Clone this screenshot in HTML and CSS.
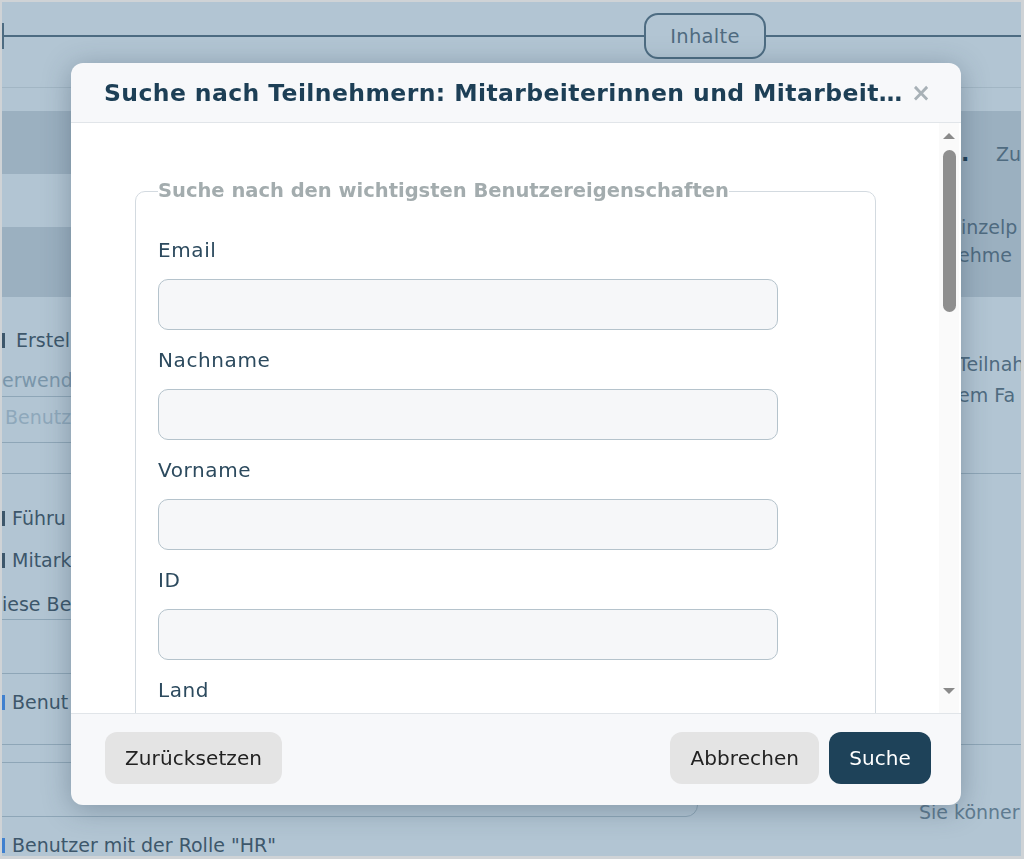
FILE: index.html
```html
<!DOCTYPE html>
<html lang="de">
<head>
<meta charset="utf-8">
<title>Suche nach Teilnehmern</title>
<link rel="stylesheet" href="styles.css">
</head>
<body>
<div class="frame">
  <div class="page">
    <header class="tabs">
      <span class="tick"></span>
      <span class="tab">Inhalte</span>
    </header>

    <section class="band">
      <div class="band-left">
        <div class="band-cell dark h63"></div>
        <div class="band-cell light h53"></div>
        <div class="band-cell dark h70"></div>
      </div>
      <div class="band-right">
        <p class="bg-line first"><span class="dot">.</span><span class="zu">Zu</span></p>
        <p class="bg-line r-inz">inzelp</p>
        <p class="bg-line r-ehm">ehme</p>
      </div>
    </section>

    <section class="rows rows-c">
      <div class="col-left">
        <p class="bg-line erstel"><span class="mark"></span>Erstel</p>
        <p class="bg-line muted erw">erwende</p>
        <p class="bg-line faint benutz">Benutz</p>
      </div>
      <div class="col-right">
        <p class="bg-line teil">Teilnah</p>
        <p class="bg-line emfa">em Fa</p>
      </div>
    </section>

    <section class="rows rows-d">
      <div class="col-left">
        <p class="bg-line fuehr"><span class="mark"></span>Führu</p>
        <p class="bg-line mitar"><span class="mark"></span>Mitark</p>
        <p class="bg-line diese">iese Be</p>
        <p class="bg-line benut"><span class="mark blue"></span>Benut</p>
      </div>
    </section>

    <section class="rows rows-e">
      <div class="col-left">
        <div class="bg-box"></div>
        <p class="bg-line hr"><span class="mark blue"></span>Benutzer mit der Rolle "HR"</p>
      </div>
      <div class="col-right">
        <p class="bg-line sie">Sie könner</p>
      </div>
    </section>
  </div>
</div>

<div class="modal" role="dialog" aria-labelledby="modal-title">
  <div class="modal-header">
    <h2 id="modal-title" class="modal-title">Suche nach Teilnehmern: Mitarbeiterinnen und Mitarbeiter</h2>
    <span class="modal-close" aria-label="Schließen">×</span>
  </div>
  <div class="modal-body">
    <div class="scroll-content">
      <fieldset class="group">
        <legend class="group-legend">Suche nach den wichtigsten Benutzereigenschaften</legend>
        <label class="field-label">Email</label>
        <input class="field-input" type="text">
        <label class="field-label">Nachname</label>
        <input class="field-input" type="text">
        <label class="field-label">Vorname</label>
        <input class="field-input" type="text">
        <label class="field-label">ID</label>
        <input class="field-input" type="text">
        <label class="field-label">Land</label>
        <input class="field-input" type="text">
      </fieldset>
    </div>
    <div class="scrollbar">
      <span class="arrow up"></span>
      <span class="thumb"></span>
      <span class="arrow down"></span>
    </div>
  </div>
  <div class="modal-footer">
    <button class="btn">Zurücksetzen</button>
    <div class="footer-right">
      <button class="btn">Abbrechen</button>
      <button class="btn primary">Suche</button>
    </div>
  </div>
</div>
</body>
</html>
```

FILE: styles.css
```css
* { box-sizing: border-box; }

html, body {
  margin: 0;
  padding: 0;
  height: 100%;
  overflow: hidden;
  font-family: "DejaVu Sans", "Noto Sans", sans-serif;
}

body { background: #cfd3d6; }

/* outer window frame */
.frame {
  width: 1024px;
  height: 859px;
  padding: 2px 3px 3px 2px;
  background: #cfd3d6;
}

/* dimmed page behind the dialog */
.page {
  width: 100%;
  height: 100%;
  background: #b2c5d3;
  overflow: hidden;
  color: #3d576b;
}

.tabs {
  height: 86px;
  border-bottom: 1px solid #a2b6c4;
  display: flex;
  align-items: flex-start;
  position: relative;
  padding-top: 11px;
}
.tabs::before {
  content: "";
  position: absolute;
  left: 0;
  right: 0;
  top: 33px;
  height: 2px;
  background: #4d6c82;
}
.tick {
  width: 2px;
  height: 26px;
  margin-top: 10px;
  background: #4d6c82;
  position: relative;
}
.tab {
  position: relative;
  margin-left: 640px;
  width: 122px;
  height: 46px;
  border: 2px solid #4d6c82;
  border-radius: 14px;
  background: #b2c5d3;
  display: flex;
  align-items: center;
  justify-content: center;
  font-size: 19.5px;
  letter-spacing: 0.3px;
  color: #4f6b80;
}

.bg-line {
  margin: 0;
  font-size: 19px;
  line-height: 24px;
  white-space: nowrap;
  display: flex;
  align-items: center;
}

.band {
  margin-top: 23px;
  height: 186px;
  display: flex;
  justify-content: space-between;
  background: #9bb0c0;
}
.band-left { width: 80px; display: flex; flex-direction: column; }
.band-cell.dark { background: #9bb0c0; }
.band-cell.light { background: #b2c5d3; }
.h63 { height: 63px; }
.h53 { height: 53px; }
.h70 { height: 70px; }

.band-right { width: 60px; padding-top: 31px; }
.dot { font-weight: bold; color: #1d3f56; width: 37px; font-size: 22px; }
.zu { color: #4f6b80; }
.r-inz { margin-top: 49px; color: #4f6b80; }
.r-ehm { margin-top: 4px; margin-left: -3px; color: #4f6b80; }

.rows {
  display: flex;
  justify-content: space-between;
}
.col-left { display: flex; flex-direction: column; }
.col-right { width: 100px; display: flex; flex-direction: column; }

.rows-c { height: 177px; border-bottom: 1px solid #8ea6b7; }
.erstel { margin-top: 31px; gap: 11px; }
.erw { margin-top: 16px; color: #7a96aa; width: 80px; padding-bottom: 4px; border-bottom: 1px solid #8ea6b7; }
.benutz { margin-top: 8px; padding-left: 3px; color: #8ea8bb; width: 80px; padding-bottom: 13px; border-bottom: 1px solid #8ea6b7; }
.teil { margin-top: 55px; padding-left: 37px; color: #4f6b80; }
.emfa { margin-top: 7px; padding-left: 37px; color: #4f6b80; }

.mark {
  width: 3px;
  height: 15px;
  background: #3d576b;
  display: inline-block;
}
.mark.blue { background: #3f80cf; }

.rows-d { height: 271px; border-bottom: 1px solid #8ea6b7; }
.fuehr { margin-top: 32px; gap: 7px; }
.mitar { margin-top: 18px; gap: 7px; }
.diese { margin-top: 20px; width: 80px; padding-bottom: 3px; border-bottom: 1px solid #8ea6b7; }
.benut { margin-top: 53px; gap: 7px; padding-top: 16px; border-top: 1px solid #8ea6b7; width: 80px; }

.rows-e { height: 120px; }
.bg-box {
  margin-top: 17px;
  margin-left: -20px;
  width: 716px;
  height: 55px;
  border: 1px solid #8ea6b7;
  border-radius: 0 12px 12px 0;
}
.hr { margin-top: 16px; gap: 7px; }
.col-right .sie { margin-top: 55px; margin-left: -2px; color: #5f7b90; }

/* dialog */
.modal {
  position: fixed;
  left: 71px;
  top: 63px;
  width: 890px;
  height: 742px;
  border-radius: 12px;
  background: #f7f8fa;
  box-shadow: 0 4px 28px rgba(40, 60, 80, 0.35);
  display: flex;
  flex-direction: column;
  overflow: hidden;
}

.modal-header {
  height: 60px;
  flex: none;
  display: flex;
  align-items: center;
  padding: 0 30px 0 33px;
  border-bottom: 1px solid #e1e5e9;
}
.modal-title {
  flex: 1;
  min-width: 0;
  margin: 0;
  font-size: 23.5px;
  font-weight: bold;
  color: #1d3f56;
  white-space: nowrap;
  overflow: hidden;
  text-overflow: ellipsis;
  letter-spacing: 0.4px;
}
.modal-close {
  margin-left: 6px;
  font-size: 24px;
  font-weight: bold;
  color: #a8b1b7;
  line-height: 1;
}

.modal-body {
  height: 590px;
  flex: none;
  background: #fff;
  display: flex;
  overflow: hidden;
}
.scroll-content {
  flex: 1;
  padding: 57px 0 0 64px;
  overflow: hidden;
}

.group {
  margin: 0;
  width: 741px;
  border: 1px solid #d3dae0;
  border-radius: 10px;
  padding: 0 0 40px 22px;
  display: flex;
  flex-direction: column;
  align-items: flex-start;
}
.group-legend {
  padding: 0;
  font-size: 19.5px;
  font-weight: bold;
  line-height: 22px;
  color: #a3acae;
  letter-spacing: 0;
}
.field-label {
  font-size: 20px;
  line-height: 30px;
  color: #2c4a5e;
  letter-spacing: 0.6px;
  margin-top: 15px;
  margin-bottom: 14px;
}
.field-label:first-of-type { margin-top: 33px; }
.field-input {
  width: 620px;
  height: 51px;
  border: 1px solid #b5c3cc;
  border-radius: 10px;
  background: #f6f7f9;
  margin: 0;
}

.scrollbar {
  width: 20px;
  margin-right: 2px;
  background: #fafafa;
  display: flex;
  flex-direction: column;
  align-items: center;
  padding-top: 10px;
}
.arrow {
  width: 0;
  height: 0;
  border-left: 6px solid transparent;
  border-right: 6px solid transparent;
}
.arrow.up { border-bottom: 6px solid #8a8a8a; }
.arrow.down { border-top: 6px solid #8a8a8a; margin-top: auto; margin-bottom: 19px; }
.thumb {
  width: 13px;
  height: 162px;
  margin-top: 11px;
  border-radius: 7px;
  background: #8f8f8f;
}

.modal-footer {
  flex: 1;
  border-top: 1px solid #e1e5e9;
  display: flex;
  align-items: center;
  justify-content: space-between;
  padding: 0 30px 3px 34px;
}
.footer-right { display: flex; gap: 10px; }
.btn {
  height: 52px;
  border: none;
  border-radius: 12px;
  background: #e4e4e4;
  color: #222;
  font-family: "DejaVu Sans", "Noto Sans", sans-serif;
  font-size: 20px;
  letter-spacing: 0.1px;
  padding: 0 20px;
}
.btn.primary {
  background: #1e4259;
  color: #fff;
}
```
